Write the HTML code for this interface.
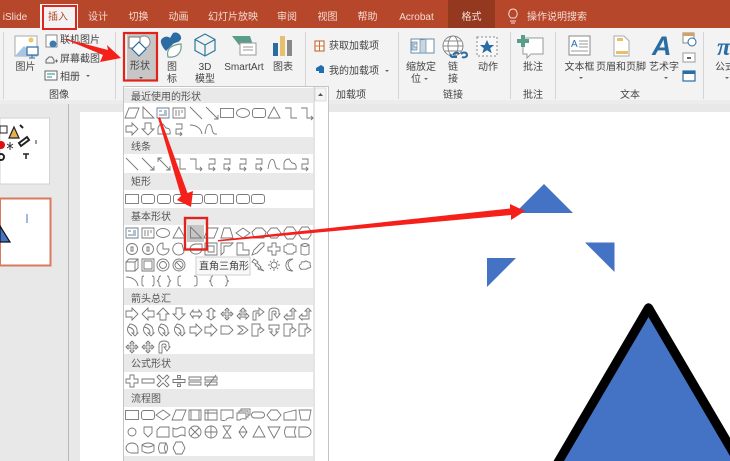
<!DOCTYPE html>
<html><head><meta charset="utf-8"><style>
html,body{margin:0;padding:0;background:#fff;overflow:hidden;width:730px;height:461px}
svg{display:block;filter:blur(.3px)}
text{font-family:"Liberation Sans","Noto Sans CJK SC",sans-serif;font-size:10px;fill:#444}
.t text{fill:#f4dcd4;text-anchor:middle}
.c text{text-anchor:middle}
.h text{fill:#555}
#s use{stroke:#777;stroke-width:.9;fill:none}
</style></head><body>
<svg width="730" height="461" viewBox="0 0 730 461" xmlns="http://www.w3.org/2000/svg">
<defs>
<g id="para"><path d="M-7 5L-3-5H7L3 5Z"/></g>
<g id="rt"><path d="M-5-6L6 5H-5Z"/></g>
<g id="tb"><path d="M-6-5H6V5H-6ZM-4-2H-1M1-2H4M1 0H4M-4 2H4" stroke="#6b7f95"/></g>
<g id="vt"><path d="M-6-5H6V5H-6ZM-3-3V3M0-3V3M3-3V0"/></g>
<g id="ln"><path d="M-6-6L6 6"/></g>
<g id="la"><path d="M-6-6L6 6M6 2V6H2"/></g>
<g id="da"><path d="M-6-6L6 6M6 2V6H2M-6-2V-6H-2"/></g>
<g id="r"><rect x="-6.500" y="-4.500" width="13" height="9"/></g>
<g id="rr"><rect x="-6.500" y="-4.500" width="13" height="9" rx="2.500"/></g>
<g id="e"><ellipse rx="6.500" ry="4.500"/></g>
<g id="tri"><path d="M0-6L6 5H-6Z"/></g>
<g id="el"><path d="M-6-5H0V5H6"/></g>
<g id="ela"><path d="M-6-5H0V5H6M4 3L6 5L4 7"/></g>
<g id="s1"><path d="M-3-5H3V0H-3V5H3M1 3L3 5L1 7"/></g>
<g id="wv"><path d="M-6 5C-4-8 0-6 1 0C2 6 4 5 6 5"/></g>
<g id="arc"><path d="M-6-4C0-4 5-1 6 5"/></g>
<g id="fr"><path d="M-6 5V-1Q-5-5-1-5L2-1Q7-1 6 5Z"/></g>
<g id="ra"><path d="M-6-3H0V-6L6 0L0 6V3H-6Z"/></g>
<g id="lea"><path d="M6-3H0V-6L-6 0L0 6V3H6Z"/></g>
<g id="ua"><path d="M-3 6V0H-6L0-6L6 0H3V6Z"/></g>
<g id="doa"><path d="M-3-6V0H-6L0 6L6 0H3V-6Z"/></g>
<g id="lr"><path d="M-6 0L-3-4V-2H3V-4L6 0L3 4V2H-3V4Z"/></g>
<g id="ud"><path d="M0-6L4-3H2V3H4L0 6L-4 3H-2V-3H-4Z"/></g>
<g id="qa"><path d="M0-6L2-4H1V-1H4V-2L6 0L4 2V1H1V4H2L0 6L-2 4H-1V1H-4V2L-6 0L-4-2V-1H-1V-4H-2Z"/></g>
<g id="lru"><path d="M0-6L3-3H1V1H3V-1L6 2L3 5V3H-3V5L-6 2L-3-1V1H-1V-3H-3Z"/></g>
<g id="ben"><path d="M-5 6V-1Q-5-3-3-3H1V-6L6-2L1 2V-1H-2V6Z"/></g>
<g id="ut"><path d="M-5 6V-2Q-5-6 0-6Q5-6 5-2V0H6L3 4L0 0H2V-2Q2-3 0-3Q-2-3-2-2V6Z"/></g>
<g id="lu"><path d="M-6 3L-3 0V2H2V-3H0L3-6L6-3H4V5H-3V6Z"/></g>
<g id="cv"><path d="M-2-6Q6-5 5 3H6L3 6L0 3H2Q2-2-4-3ZM-4-3Q-6 2 0 6"/></g>
<g id="pent"><path d="M-6-4H2L6 0L2 4H-6Z"/></g>
<g id="chev"><path d="M-5-4H0L5 0L0 4H-5L0 0Z"/></g>
<g id="co"><path d="M-6-6H2V-1H0V6H-6ZM2-3L6 0L2 3"/></g>
<g id="tr"><path d="M-5-5H5V-1H2V2H4L0 6L-4 2H-2V-1H-5Z"/></g>
<g id="dm"><path d="M0-5L7 0L0 5L-7 0Z"/></g>
<g id="tz"><path d="M-6 5L-3-5H3L6 5Z"/></g>
<g id="pa"><path d="M-5 5L-7-1L-3-5H3L7-1L5 5Z"/></g>
<g id="hx"><path d="M-7 0L-3-5H3L7 0L3 5H-3Z"/></g>
<g id="oc"><path d="M-3-6H3L6-2V2L3 6H-3L-6 2V-2Z"/></g>
<g id="n"><circle r="5.500"/><path d="M-1-2H1V2H-1Z"/></g>
<g id="pi"><path d="M0-6A6 6 0 1 0 6 0H0Z"/></g>
<g id="ch"><path d="M3-5A6 6 0 1 0 5 3Z"/></g>
<g id="td"><path d="M6-5V0A6 5 0 1 1 0-5Z"/></g>
<g id="fa"><path d="M-6-6H6V6H-6ZM-3-3H3V3H-3Z"/></g>
<g id="hf"><path d="M-6-6H6L3-3H-3V3L-6 6Z"/></g>
<g id="L"><path d="M-6-6H0V1H6V6H-6Z"/></g>
<g id="dg"><path d="M-6 6L-4 1L3-6H6V-3L-1 4Z"/></g>
<g id="cr"><path d="M-2-6H2V-2H6V2H2V6H-2V2H-6V-2H-2Z"/></g>
<g id="pq"><path d="M-3-5H3Q3-3 6-3V3Q3 3 3 5H-3Q-3 3-6 3V-3Q-3-3-3-5Z"/></g>
<g id="cn"><path d="M-4-4V5Q0 7 4 5V-4M-4-4Q0-7 4-4Q0-1-4-4Z"/></g>
<g id="cb"><path d="M-6-3H3V6H-6ZM-6-3L-3-6H6V3L3 6M3-3L6-6"/></g>
<g id="bv"><path d="M-6-6H6V6H-6ZM-4-4H4V4H-4Z"/></g>
<g id="dn"><circle r="6"/><circle r="3.500"/></g>
<g id="ns"><circle r="6"/><circle r="4"/><path d="M-3-3L3 3"/></g>
<g id="lt"><path d="M-4-6L0-3L-1-2L3 2L2 3L6 6L0 4L1 3L-3 0L-2-1L-6-3Z"/></g>
<g id="su"><circle r="3"/><path d="M0-6V-4M0 4V6M-6 0H-4M4 0H6M-4-4L-3-3M3 3L4 4M4-4L3-3M-3 3L-4 4"/></g>
<g id="mo"><path d="M3-6Q-4-3-1 2Q0 5 3 6Q-5 6-4-1Q-3-6 3-6Z"/></g>
<g id="cl"><path d="M-5 3Q-7 0-4-1Q-4-4-1-3Q1-5 3-3Q6-3 5 0Q7 3 3 3Q1 5-1 4Q-4 5-5 3Z"/></g>
<g id="bs"><path d="M-4-5Q-6-5-6-3V3Q-6 5-4 5M4-5Q6-5 6-3V3Q6 5 4 5"/></g>
<g id="bb"><path d="M-3-5Q-5-5-5-3T-7 0Q-5 0-5 3T-3 5M3-5Q5-5 5-3T7 0Q5 0 5 3T3 5"/></g>
<g id="lb"><path d="M2-5Q-1-5-1-3V3Q-1 5 2 5"/></g>
<g id="rb"><path d="M-2-5Q1-5 1-3V3Q1 5-2 5"/></g>
<g id="lc"><path d="M2-5Q0-5 0-2Q0 0-2 0Q0 0 0 2Q0 5 2 5"/></g>
<g id="rc"><path d="M-2-5Q0-5 0-2Q0 0 2 0Q0 0 0 2Q0 5-2 5"/></g>
<g id="pl"><path d="M-2-6H2V-2H6V2H2V6H-2V2H-6V-2H-2Z"/></g>
<g id="mi"><path d="M-6-2H6V2H-6Z"/></g>
<g id="ti"><path d="M-4-6L0-2L4-6L6-4L2 0L6 4L4 6L0 2L-4 6L-6 4L-2 0L-6-4Z"/></g>
<g id="di"><path d="M-6-1.500H6V1.500H-6ZM-1.500-5.500H1.500V-3H-1.500ZM-1.500 3H1.500V5.500H-1.500Z"/></g>
<g id="eq"><path d="M-6-4H6V-1H-6ZM-6 1H6V4H-6Z"/></g>
<g id="ne"><path d="M-6-4H6V-1H-6ZM-6 1H6V4H-6ZM-4 6L5-6"/></g>
<g id="pd"><path d="M-6-5H6V5H-6ZM-4-5V5M4-5V5"/></g>
<g id="it"><path d="M-6-5H6V5H-6ZM-3-5V5M-6-2H6"/></g>
<g id="dc"><path d="M-6-5H6V3Q0 2-1 5Q-4 6-6 5Z"/></g>
<g id="md"><path d="M-6-2H3V4Q-2 3-3 5H-6ZM-4-2V-4H5V2H3M-2-4V-6H7V0H5"/></g>
<g id="tm"><rect x="-6.500" y="-3" width="13" height="6" rx="3"/></g>
<g id="mn"><path d="M-6-2L6-5V5H-6Z"/></g>
<g id="mp"><path d="M-6-5H6L4 5H-4Z"/></g>
<g id="c"><circle r="4"/></g>
<g id="op"><path d="M-4-5H4V1L0 5L-4 1Z"/></g>
<g id="cd"><path d="M-3-5H6V5H-6V-2Z"/></g>
<g id="tp"><path d="M-6-4Q-3-2 0-4T6-4V4Q3 2 0 4T-6 4Z"/></g>
<g id="sj"><circle r="6"/><path d="M-4-4L4 4M4-4L-4 4"/></g>
<g id="or"><circle r="6"/><path d="M-6 0H6M0-6V6"/></g>
<g id="cl2"><path d="M-4-6H4L-4 6H4Z"/></g>
<g id="so"><path d="M0-6L4 0L0 6L-4 0ZM-4 0H4"/></g>
<g id="ex"><path d="M0-6L6 5H-6Z"/></g>
<g id="mg"><path d="M-6-5H6L0 6Z"/></g>
<g id="st"><path d="M-4-5H6Q3 0 6 5H-4Q-7 0-4-5Z"/></g>
<g id="dl"><path d="M-6-5H0A6 5 0 0 1 0 5H-6Z"/></g>
<g id="sq"><path d="M6 5H0A6 5 0 1 1 6 0Z"/></g>
<g id="dk"><path d="M-6-3V3Q0 7 6 3V-3M-6-3Q0-7 6-3Q0 1-6-3Z"/></g>
<g id="dr"><path d="M-3-5H3Q6 0 3 5H-3Q-6 0-3-5ZM3-5Q0 0 3 5"/></g>
<g id="dp"><path d="M-3-6H3L6 0L3 6H-3L-6 0Z"/></g>
</defs>

<!-- backgrounds -->
<rect width="730" height="461" fill="#e8e8e8"/>
<rect x="0" y="0" width="730" height="28" fill="#b7472a"/>
<rect x="0" y="28" width="730" height="72" fill="#f3f3f3"/>
<rect x="0" y="100" width="730" height="4" fill="#ececec"/>
<rect x="68" y="104" width="1" height="357" fill="#b8b8b8"/>
<rect x="80" y="112" width="650" height="349" fill="#fff"/>
<rect x="448" y="0" width="47" height="28" fill="#94381f"/>
<rect x="40" y="4" width="38" height="26" fill="#f3f3f3"/>

<!-- tabs -->
<g class="t">
<text x="15" y="20">iSlide</text>
<text x="98" y="20">设计</text><text x="138.500" y="20">切换</text><text x="178.500" y="20">动画</text>
<text x="233" y="20">幻灯片放映</text><text x="287" y="20">审阅</text><text x="327.500" y="20">视图</text>
<text x="367.500" y="20">帮助</text><text x="416.500" y="20">Acrobat</text><text x="471.500" y="20">格式</text>
<text x="557" y="20">操作说明搜索</text>
</g>
<text x="48" y="20" style="fill:#b7472a">插入</text>
<rect x="43" y="6" width="33" height="23" fill="none" stroke="#e0231c" stroke-width="2"/>
<path d="M510 21h6M511 23h4M511 18c-4-3-2-9 2-9s6 6 2 9z" fill="none" stroke="#f4dcd4"/>

<!-- separators -->
<g fill="#d4d4d4"><rect x="3" y="32" width="1" height="67"/><rect x="115" y="32" width="1" height="67"/><rect x="305" y="32" width="1" height="67"/><rect x="398" y="32" width="1" height="67"/><rect x="510" y="32" width="1" height="67"/><rect x="555" y="32" width="1" height="67"/><rect x="703" y="32" width="1" height="67"/></g>

<!-- ribbon icons -->
<g>
<path d="M15 36h22v20h-22z" fill="#fff" stroke="#aaa"/><path d="M15 56l9-10 7 6 3 4z" fill="#a9c5e4"/><circle cx="31" cy="40" r="2.500" fill="#f0c568"/>
<rect x="27" y="47" width="11" height="8" fill="#fff" stroke="#2b6ca3" stroke-width="1.200"/><path d="M32 55v3h-3h6" stroke="#2b6ca3" fill="none"/>
<rect x="46" y="35" width="11" height="12" fill="#fff" stroke="#888"/><circle cx="53" cy="44" r="3.500" fill="#3a7ab5"/>
<path d="M46 60l3-3h3l2 3v3h-8zM55 61h3M56.500 59.500v3" fill="none" stroke="#666"/>
<rect x="45" y="71" width="12" height="9" fill="#fff" stroke="#666"/><path d="M47 74h8M47 77h5" stroke="#2a8a8a"/>
<path d="M86 75l2 2 2-2z" fill="#666"/>
<rect x="127" y="33" width="29" height="47" fill="#c6c6c6"/>
<circle cx="144" cy="42" r="6" fill="#fff" stroke="#888"/><rect x="129" y="37" width="11" height="11" fill="#fff" stroke="#777"/><path d="M139 42l7 7-7 7-7-7z" fill="#fff" stroke="#2b6ca3" stroke-width="1.200"/>
<path d="M139 77l2 2 2-2z" fill="#555"/>
<rect x="124" y="33" width="33" height="47.500" fill="none" stroke="#e0231c" stroke-width="2.200"/>
<path d="M161 40c3-4 7-4 9-2l3-5c5-2 9 3 8 6-2 4-6 3-8 5-3 3-5 5-7 7-3-3-6-8-5-11z" fill="#2b6ca3"/>
<path d="M168 57c-2-8 3-12 13-13 1 8-3 14-13 13z" fill="#fff" stroke="#6aa08a" stroke-width="1.200"/>
<path d="M205 34l10 5.500v11l-10 5.500-10-5.500v-11zM195 39.500l10 5.500 10-5.500M205 45v11" fill="none" stroke="#2b7a9c" stroke-width="1.200"/>
<path d="M232 36h18l3 9h-14z" fill="#5b9d8b"/><rect x="240" y="43" width="16" height="12" fill="#fff" stroke="#999"/><path d="M243 47h10M243 50h10" stroke="#999"/>
<rect x="273" y="43" width="5" height="13" fill="#2b6ca3"/><rect x="280" y="36" width="5" height="20" fill="#e8c06c"/><rect x="287" y="40" width="5" height="16" fill="#888"/>
<rect x="315" y="41" width="9" height="10" fill="#fff" stroke="#d0703c" stroke-width="1.200"/><path d="M319.500 41v10M315 46h9" stroke="#d0703c"/>
<path d="M316 68l5-3 3 2v6h-5v-2h-3z" fill="#1f6fb0"/>
<rect x="411" y="39" width="23" height="14" fill="#fff" stroke="#6a8ea8"/><path d="M417 42h-5v8h5zM420 40l6-1v14h-6zM414 44h3v3h-3z" fill="#c8d6e0" stroke="#6a8ea8" stroke-width=".7"/>
<circle cx="453" cy="46" r="10" fill="#fff" stroke="#888"/><ellipse cx="453" cy="46" rx="5" ry="10" fill="none" stroke="#888"/><path d="M443 46h20M445 41h16M445 51h16" stroke="#888" fill="none"/>
<path d="M453 55c2-3 4-3 6-1M461 54c3-3 6-1 6 1s-3 3-5 2M451 54c-1 2 0 3 2 3h4" fill="none" stroke="#2b6ca3" stroke-width="2"/>
<rect x="477" y="37" width="20" height="19" fill="#f8f8f8" stroke="#888" stroke-dasharray="2 2"/><path d="M487 40l2.200 5h5l-4 3.200 1.500 5-4.700-3-4.700 3 1.500-5-4-3.200h5z" fill="#2b6ca3"/>
<path d="M523 38h20v16h-12l-4 4v-4h-4z" fill="#fff" stroke="#999"/><path d="M521 35h4v4h4v4h-4v4h-4v-4h-4v-4h4z" fill="#5b9d8b"/>
<rect x="569" y="36" width="21" height="19" fill="#fff" stroke="#888"/><text x="571" y="47" style="fill:#2b6ca3;font-size:10px">A</text><path d="M579 41h9M579 44h9M579 47h9M571 51h17" stroke="#999"/>
<path d="M614 36h10l5 5v15h-15z" fill="#fff" stroke="#aaa"/><rect x="617" y="38" width="6" height="3" fill="#e8c06c"/><rect x="616" y="51" width="12" height="3" fill="#e8c06c"/>
<text x="652" y="55" style="fill:#2b6ca3;font-size:27px;font-style:italic;font-weight:bold">A</text>
<rect x="683" y="33" width="11" height="10" fill="#fff" stroke="#888"/><rect x="683" y="33" width="11" height="3" fill="#d8a060"/><circle cx="692" cy="42" r="4" fill="#fff" stroke="#2b6ca3"/>
<rect x="683" y="53" width="12" height="9" fill="#fff" stroke="#999"/><rect x="687" y="57" width="4" height="2" fill="#666"/>
<rect x="683" y="71" width="12" height="10" fill="#fff" stroke="#2b6ca3" stroke-width="1.200"/><rect x="683" y="71" width="12" height="3" fill="#2b6ca3"/>
<text x="717" y="55" style="fill:#2b6ca3;font-size:25px;font-style:italic;font-family:'Liberation Serif',serif;font-weight:bold">π</text>
</g>

<!-- ribbon text -->
<g class="c">
<text x="25.500" y="70">图片</text><text x="59" y="98">图像</text>
<text x="140" y="69">形状</text>
<text x="172" y="70">图</text><text x="172" y="82">标</text>
<text x="205" y="70">3D</text><text x="205" y="82">模型</text>
<text x="244" y="70">SmartArt</text><text x="283" y="70">图表</text>
<text x="351" y="98">加载项</text>
<text x="421" y="70">缩放定</text><text x="416" y="82">位</text>
<text x="453" y="70">链</text><text x="453" y="82">接</text>
<text x="488" y="70">动作</text><text x="453" y="98">链接</text>
<text x="533" y="70">批注</text><text x="533" y="98">批注</text>
<text x="579.500" y="70">文本框</text><text x="621" y="70">页眉和页脚</text><text x="664" y="70">艺术字</text><text x="630" y="98">文本</text>
<text x="725" y="70">公式</text>
</g>
<text x="60" y="43">联机图片</text><text x="60" y="62">屏幕截图</text><text x="60" y="80">相册</text>
<text x="329" y="49">获取加载项</text><text x="329" y="74">我的加载项</text>
<path d="M385 70l2 2 2-2zM424 78l2 2 2-2zM579 77l2 2 2-2zM664 77l2 2 2-2zM725 77l2 2 2-2z" fill="#666"/>

<!-- thumbnails -->
<rect x="0" y="118" width="49.500" height="66" fill="#fff" stroke="#d2d2d2"/>
<path d="M14 127l5 11h-10z" fill="#e8b050" stroke="#222" stroke-width="1.200"/><rect x="0" y="126" width="7" height="7" fill="#fff" stroke="#222"/>
<circle cx="1" cy="145" r="4" fill="#e01010"/><path d="M19 143l8-6 2 3-8 6zM20 125l3 3" stroke="#222" stroke-width="2" fill="none"/>
<path d="M10 142v8M7 144l6 4M13 144l-6 4M36 140v4" stroke="#333" fill="none"/><circle cx="1" cy="157" r="3" fill="none" stroke="#222" stroke-width="2"/>
<path d="M23 154h6M26 154v5" stroke="#222" stroke-width="1.500"/>
<rect x="0" y="198.500" width="50.500" height="67" fill="#fff" stroke="#d87a60" stroke-width="2"/>
<path d="M0 226l10 16h-10z" fill="#4472c4" stroke="#111" stroke-width="1.200"/>
<rect x="26.500" y="214" width="1" height="9" fill="#4472c4"/>

<!-- slide shapes -->
<path d="M544 184L573 213H515Z" fill="#4472c4"/>
<path d="M585 242.500H614.500V272Z" fill="#4472c4"/>
<path d="M487 258H516L487 287Z" fill="#4472c4"/>
<path d="M553.500 461L644.600 305.500Q648.500 301 652.400 305.500L730 437.800V461Z" fill="#000"/>
<path d="M648.500 317L730 456V461H564Z" fill="#4472c4"/>

<!-- dropdown -->
<path d="M123.500 461V86.500H328.500V461" fill="#fff" stroke="#c4c4c4"/>
<g fill="#e9e9e9">
<rect x="124" y="88" width="189" height="15"/><rect x="124" y="137" width="189" height="17"/><rect x="124" y="173" width="189" height="17"/><rect x="124" y="208" width="189" height="17"/><rect x="124" y="288" width="189" height="17"/><rect x="124" y="354" width="189" height="18"/><rect x="124" y="389" width="189" height="18"/><rect x="124" y="456" width="189" height="5"/>
</g>
<rect x="313.500" y="87" width="1" height="374" fill="#c8c8c8"/>
<rect x="315" y="88" width="11" height="13" fill="#f5f5f5" stroke="#c8c8c8" stroke-width=".6"/><path d="M318 96l2.500-3 2.500 3z" fill="#555"/>
<g class="h">
<text x="131" y="100">最近使用的形状</text><text x="131" y="150">线条</text><text x="131" y="185">矩形</text><text x="131" y="220">基本形状</text><text x="131" y="302">箭头总汇</text><text x="131" y="367">公式形状</text><text x="131" y="402">流程图</text>
</g>

<rect x="187" y="225" width="17" height="17" fill="#c6c6c6"/>
<g id="s">
<g transform="translate(0,113)"><use href="#para" x="132"/><use href="#rt" x="148"/><use href="#tb" x="163"/><use href="#vt" x="179"/><use href="#ln" x="196"/><use href="#la" x="212"/><use href="#r" x="227"/><use href="#e" x="243"/><use href="#rr" x="259"/><use href="#tri" x="274"/><use href="#el" x="291"/><use href="#ela" x="307"/></g>
<g transform="translate(0,129)"><use href="#ra" x="132"/><use href="#doa" x="148"/><use href="#fr" x="164"/><use href="#s1" x="179"/><use href="#arc" x="196"/><use href="#wv" x="211"/></g>
<g transform="translate(0,164)"><use href="#ln" x="132"/><use href="#la" x="148"/><use href="#da" x="164"/><use href="#el" x="180"/><use href="#ela" x="196"/><use href="#s1" x="212"/><use href="#s1" x="227"/><use href="#s1" x="243"/><use href="#s1" x="259"/><use href="#wv" x="274"/><use href="#fr" x="290"/><use href="#s1" x="305"/></g>
<g transform="translate(0,199)"><use href="#r" x="132"/><use href="#rr" x="148"/><use href="#rr" x="164"/><use href="#rr" x="180"/><use href="#rr" x="196"/><use href="#rr" x="211"/><use href="#r" x="227"/><use href="#rr" x="243"/><use href="#rr" x="258"/></g>
<g transform="translate(0,233)"><use href="#tb" x="132"/><use href="#vt" x="148"/><use href="#e" x="163"/><use href="#tri" x="179"/><use href="#rt" x="195.500"/><use href="#para" x="211"/><use href="#tz" x="227"/><use href="#dm" x="243"/><use href="#pa" x="259"/><use href="#hx" x="274"/><use href="#oc" x="290"/><use href="#oc" x="305"/></g>
<g transform="translate(0,249)"><use href="#n" x="132"/><use href="#n" x="148"/><use href="#pi" x="163"/><use href="#ch" x="179"/><use href="#td" x="196"/><use href="#fa" x="211"/><use href="#hf" x="227"/><use href="#L" x="243"/><use href="#dg" x="258"/><use href="#cr" x="274"/><use href="#pq" x="290"/><use href="#cn" x="305"/></g>
<g transform="translate(0,265)"><use href="#cb" x="132"/><use href="#bv" x="148"/><use href="#dn" x="163"/><use href="#ns" x="179"/><use href="#lt" x="258"/><use href="#su" x="274"/><use href="#mo" x="290"/><use href="#cl" x="305"/></g>
<g transform="translate(0,281)"><use href="#arc" x="132"/><use href="#bs" x="148"/><use href="#bb" x="164"/><use href="#lb" x="179"/><use href="#rb" x="196"/><use href="#lc" x="211"/><use href="#rc" x="227"/></g>
<g transform="translate(0,314)"><use href="#ra" x="132"/><use href="#lea" x="148"/><use href="#ua" x="163"/><use href="#doa" x="179"/><use href="#lr" x="196"/><use href="#ud" x="211"/><use href="#qa" x="227"/><use href="#lru" x="243"/><use href="#ben" x="258"/><use href="#ut" x="274"/><use href="#lu" x="290"/><use href="#lu" x="305"/></g>
<g transform="translate(0,330)"><use href="#cv" x="132"/><use href="#cv" x="148"/><use href="#cv" x="163"/><use href="#cv" x="179"/><use href="#ra" x="196"/><use href="#ra" x="211"/><use href="#pent" x="227"/><use href="#chev" x="243"/><use href="#co" x="258"/><use href="#tr" x="274"/><use href="#co" x="290"/><use href="#co" x="305"/></g>
<g transform="translate(0,347)"><use href="#qa" x="132"/><use href="#qa" x="148"/><use href="#ut" x="164"/></g>
<g transform="translate(0,381)"><use href="#pl" x="132"/><use href="#mi" x="148"/><use href="#ti" x="163"/><use href="#di" x="179"/><use href="#eq" x="195"/><use href="#ne" x="211"/></g>
<g transform="translate(0,415)"><use href="#r" x="132"/><use href="#rr" x="148"/><use href="#dm" x="163"/><use href="#para" x="179"/><use href="#pd" x="195"/><use href="#it" x="211"/><use href="#dc" x="227"/><use href="#md" x="243"/><use href="#tm" x="258"/><use href="#hx" x="274"/><use href="#mn" x="290"/><use href="#mp" x="305"/></g>
<g transform="translate(0,432)"><use href="#c" x="132"/><use href="#op" x="148"/><use href="#cd" x="163"/><use href="#tp" x="179"/><use href="#sj" x="195"/><use href="#or" x="211"/><use href="#cl2" x="227"/><use href="#so" x="243"/><use href="#ex" x="259"/><use href="#mg" x="274"/><use href="#st" x="290"/><use href="#dl" x="305"/></g>
<g transform="translate(0,448)"><use href="#sq" x="132"/><use href="#dk" x="148"/><use href="#dr" x="163"/><use href="#dp" x="179"/></g>
</g>

<!-- tooltip -->
<rect x="196" y="257" width="54" height="18" fill="#f8f8f8" stroke="#cfcfcf"/>
<text x="199" y="269.500">直角三角形</text>

<!-- red highlight and arrows -->
<rect x="185" y="218" width="22" height="31.500" fill="none" stroke="#e0231c" stroke-width="2.400"/>
<g fill="#f5201a">
<path d="M62 38L108 50L107 45L121 58L100 62L103 55Z"/>
<path d="M158 118L160 117L187.500 193L193 191L191 207L177 200L181 196Z"/>
<path d="M218 240L510 208.500L510 204L525 211L511 220L511 215L218 241.500Z"/>
</g>
</svg>
</body></html>
